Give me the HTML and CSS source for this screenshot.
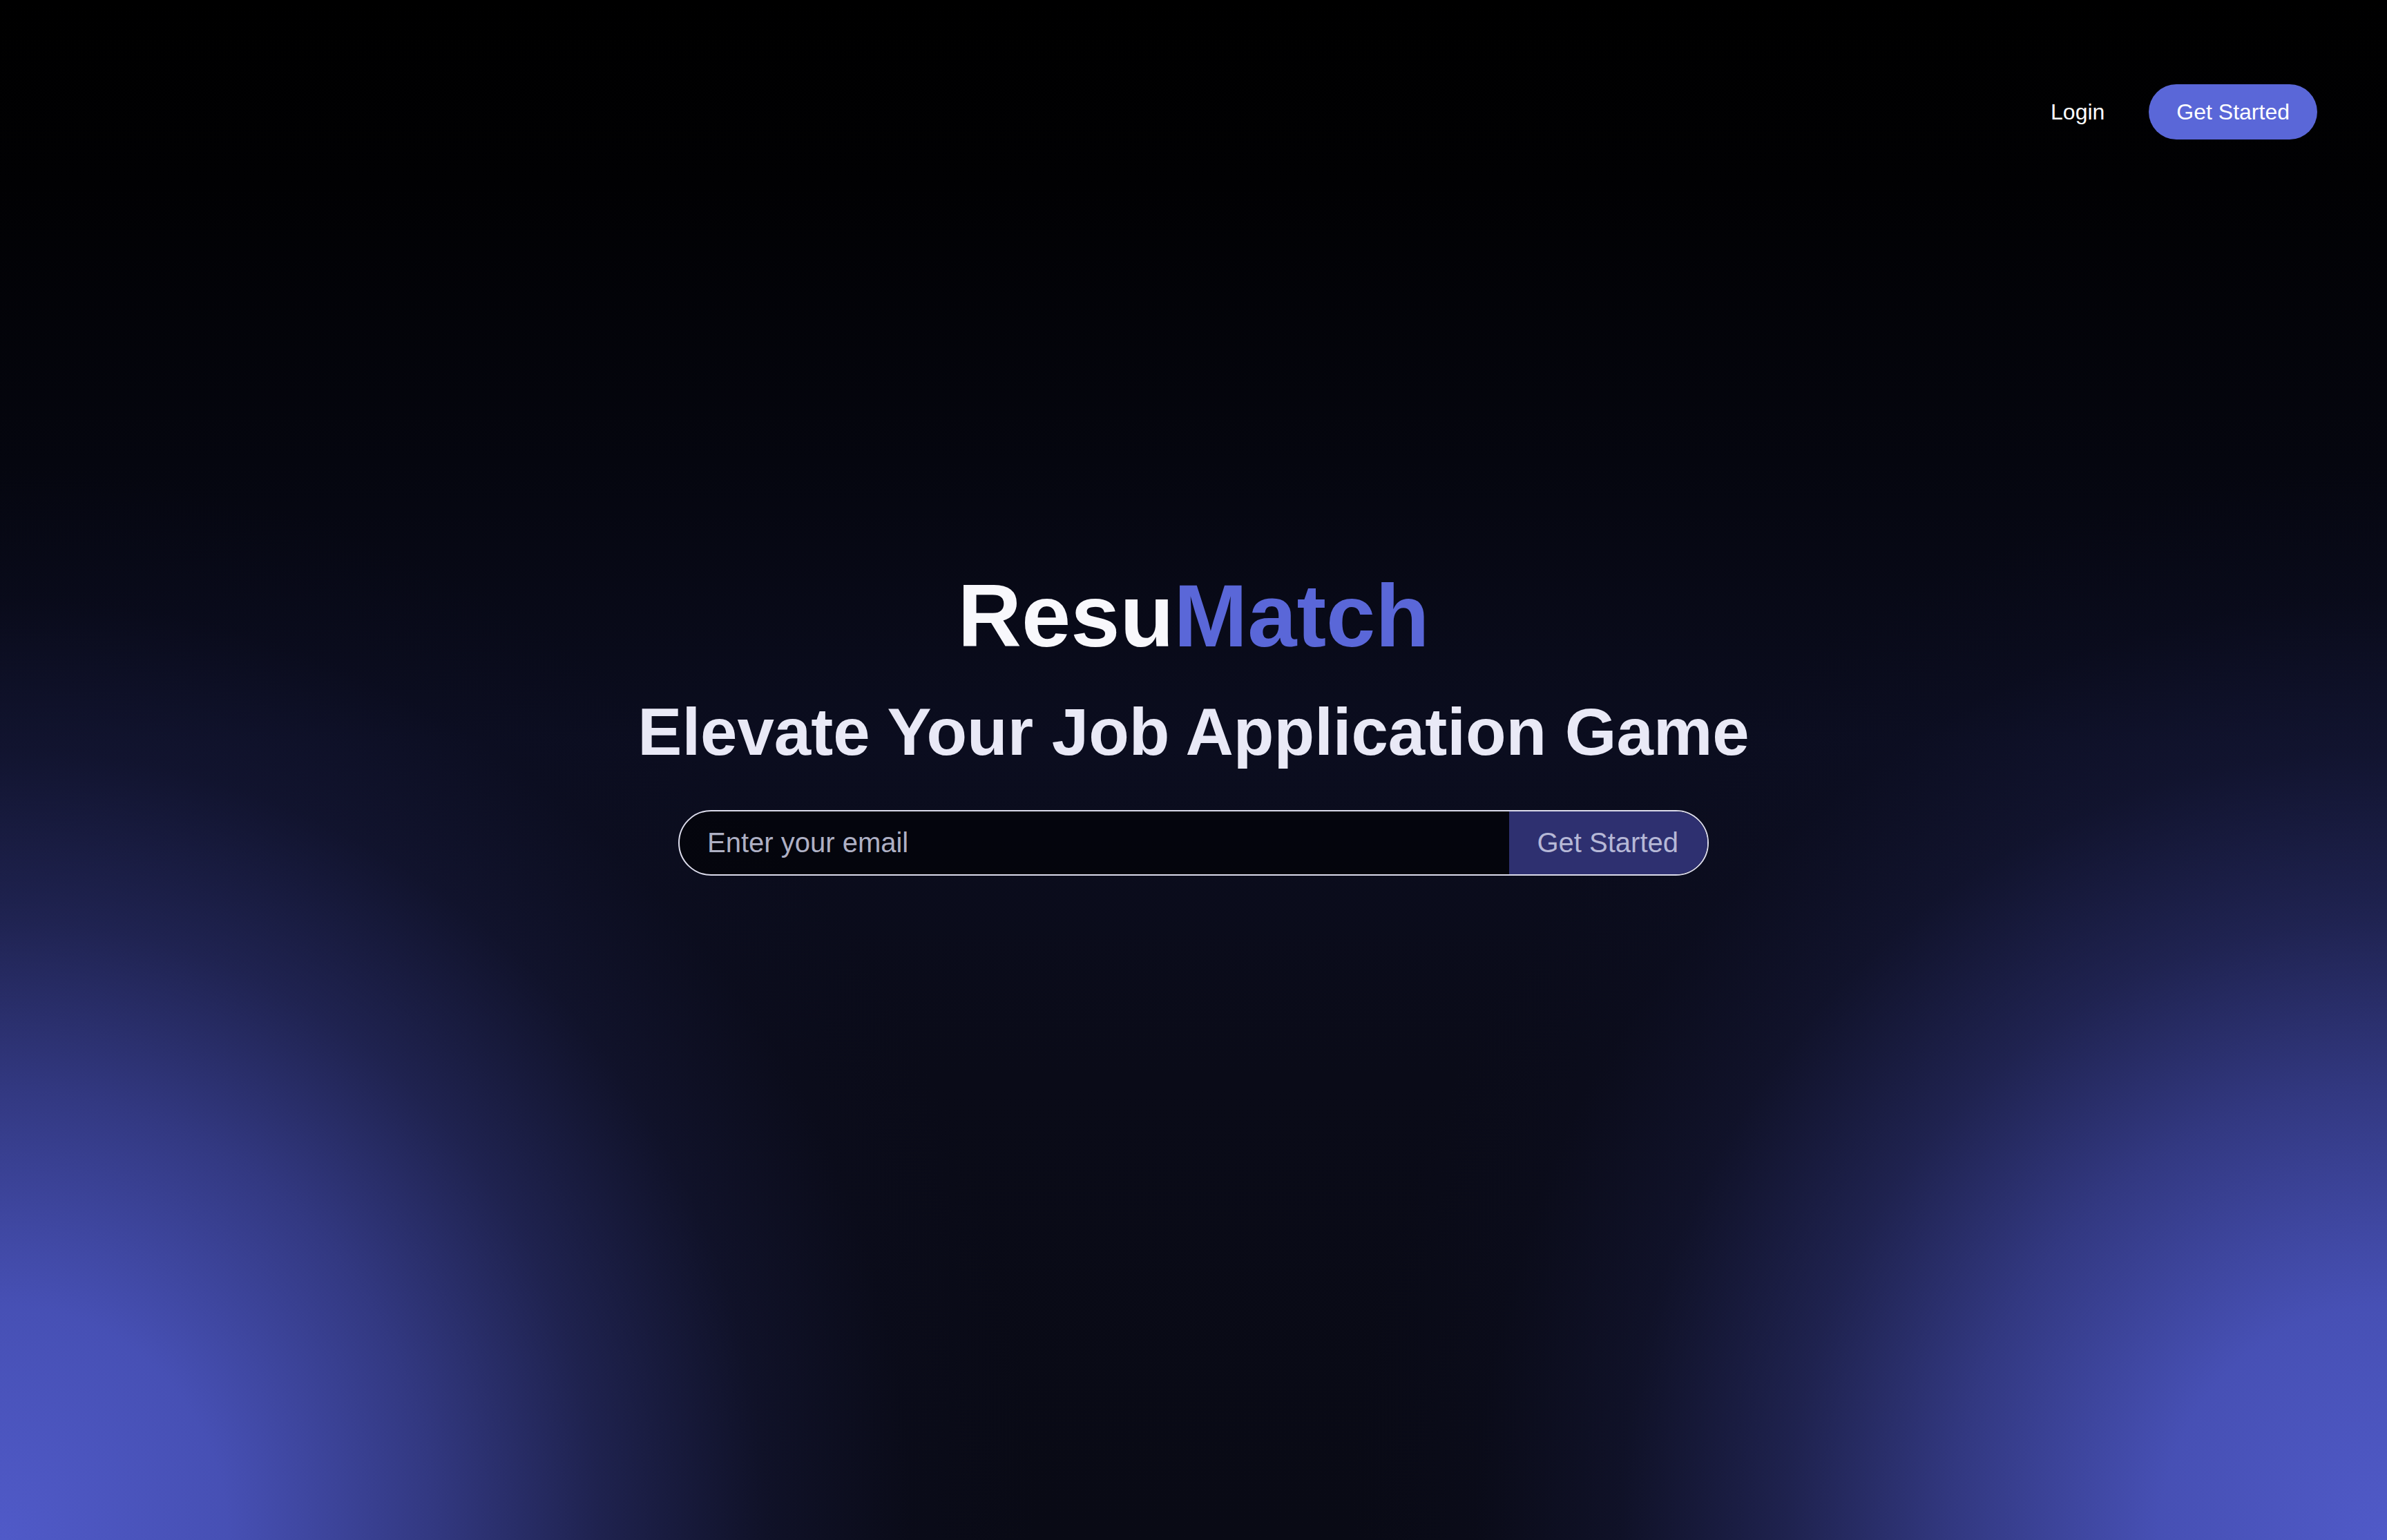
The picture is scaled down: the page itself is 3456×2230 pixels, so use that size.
FILE: index.html
```html
<!DOCTYPE html>
<html lang="en">
<head>
<meta charset="utf-8">
<title>ResuMatch</title>
<link rel="stylesheet" href="styles.css">
</head>
<body>
<div class="page">
  <header class="nav">
    <a class="nav-login" href="#">Login</a>
    <a class="nav-cta" href="#">Get Started</a>
  </header>
  <main class="hero">
    <h1 class="brand">Resu<span class="brand-accent">Match</span></h1>
    <h2 class="tagline">Elevate Your Job Application Game</h2>
    <form class="signup">
      <input class="signup-input" type="email" placeholder="Enter your email">
      <button class="signup-btn" type="button">Get Started</button>
    </form>
  </main>
</div>
</body>
</html>
```

FILE: styles.css
```css
* { box-sizing: border-box; }
html, body { margin: 0; padding: 0; }
body {
  font-family: "Liberation Sans", Arial, Helvetica, sans-serif;
  color: #fff;
  background-color: #000;
}
.page {
  min-height: 2230px;
  background:
    radial-gradient(ellipse 1500px 1550px at 0% 100%, rgba(80,90,200,1) 0%, rgba(76,86,194,0.92) 22%, rgba(66,74,170,0.72) 42%, rgba(52,58,135,0.5) 58%, rgba(34,38,90,0.27) 74%, rgba(20,22,55,0.1) 88%, rgba(0,0,0,0) 100%),
    radial-gradient(ellipse 1500px 1550px at 100% 100%, rgba(80,90,200,1) 0%, rgba(76,86,194,0.92) 22%, rgba(66,74,170,0.72) 42%, rgba(52,58,135,0.5) 58%, rgba(34,38,90,0.27) 74%, rgba(20,22,55,0.1) 88%, rgba(0,0,0,0) 100%),
    linear-gradient(to bottom, #000 0%, #010103 12%, #05060f 30%, #0b0d1f 48%, #0a0b18 70%, #090a15 100%);
}
.nav {
  display: flex;
  justify-content: flex-end;
  align-items: center;
  gap: 64px;
  padding: 122px 101px 0 0;
}
.nav-login {
  color: #fff;
  text-decoration: none;
  font-size: 32px;
  line-height: 48px;
}
.nav-cta {
  color: #fff;
  text-decoration: none;
  font-size: 32px;
  line-height: 48px;
  padding: 16px 40px;
  background: #5a67d8;
  border-radius: 999px;
}
.hero {
  display: flex;
  flex-direction: column;
  align-items: center;
  padding-top: 626px;
}
.brand {
  margin: 0 0 56px;
  font-size: 128px;
  line-height: 128px;
  font-weight: 700;
  color: #f8f8fc;
}
.brand-accent { color: #5a67d8; }
.tagline {
  margin: 0 0 65px;
  font-size: 96px;
  line-height: 96px;
  font-weight: 700;
  color: #e9e9f6;
}
.signup {
  display: flex;
  width: 1492px;
  height: 95px;
  border: 2px solid #dcdcec;
  border-radius: 999px;
  overflow: hidden;
  background: rgba(0, 0, 0, 0.55);
}
.signup-input {
  flex: 1;
  border: 0;
  outline: none;
  background: transparent;
  padding: 0 40px;
  font-family: inherit;
  font-size: 40px;
  color: #fff;
}
.signup-input::placeholder { color: #aeb0c4; }
.signup-btn {
  border: 0;
  padding: 0 42px 0 40px;
  background: #2e3070;
  color: #b6b8d6;
  font-family: inherit;
  font-size: 40px;
}
```
